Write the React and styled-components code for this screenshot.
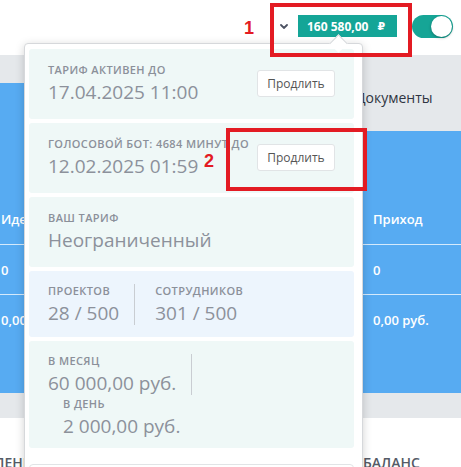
import React from "react";
import styled, { createGlobalStyle } from "styled-components";

const GlobalStyle = createGlobalStyle`
  html, body {
    margin: 0;
    padding: 0;
    overflow: hidden;
    background: #fff;
    font-family: "Open Sans", "DejaVu Sans", sans-serif;
  }
`;

const cards = [
  { label: "Тариф активен до", value: "17.04.2025 11:00", action: "Продлить" },
  { label: "Голосовой бот: 4684 минут до", value: "12.02.2025 01:59", action: "Продлить" },
  { label: "Ваш тариф", value: "Неограниченный" },
];

const App = () => {
  return (
    <>
      <GlobalStyle />
      <Page>
        <Header>
          <Chevron viewBox="0 0 8 5">
            <path d="M1 1l3 3 3-3" fill="none" stroke="#4c5262" strokeWidth="1.8" strokeLinecap="round" />
          </Chevron>
          <Balance>
            160 580,00<Rub>₽</Rub>
          </Balance>
          <Toggle>
            <Knob />
          </Toggle>
        </Header>

        <TabBar>
          <ActiveTab />
          <Tab $width="140px">Отчёты</Tab>
          <Tab>Документы</Tab>
        </TabBar>

        <Table>
          <HeadRow>
            <Cell>Идеи</Cell>
            <Cell>Приход</Cell>
          </HeadRow>
          <Row>
            <Cell>0</Cell>
            <Cell>0</Cell>
          </Row>
          <Row $last>
            <Cell>0,00 руб.</Cell>
            <Cell>0,00 руб.</Cell>
          </Row>
        </Table>

        <Band />

        <Summary>
          <SummaryCell $end>ПОСТУПЛЕНИЯ</SummaryCell>
          <SummaryCell>Баланс</SummaryCell>
        </Summary>

        <Dropdown>
          <Caret />
          {cards.map((c, i) => (
            <Card key={i}>
              <div>
                <Label>{c.label}</Label>
                <Value>{c.value}</Value>
              </div>
              {c.action && <Button>{c.action}</Button>}
            </Card>
          ))}

          <Card $tone="blue" $pad="13px 19px 12px" $start>
            <Stat $divider>
              <Label>Проектов</Label>
              <Value>28 / 500</Value>
            </Stat>
            <Stat $inset="20px">
              <Label>Сотрудников</Label>
              <Value>301 / 500</Value>
            </Stat>
          </Card>

          <Card $pad="13px 19px 10px" $column>
            <Stat $divider>
              <Label>В месяц</Label>
              <Value>60 000,00 руб.</Value>
            </Stat>
            <Stat $inset="15px" $top="2px">
              <Label>В день</Label>
              <Value>2 000,00 руб.</Value>
            </Stat>
          </Card>

          <Footer />
        </Dropdown>

        <Frame $x="270px" $y="3px" $w="142px" $h="54px" />
        <Mark $x="244px" $y="17px">1</Mark>
        <Frame $x="226px" $y="128px" $w="141px" $h="63px" />
        <Mark $x="204px" $y="150px">2</Mark>
      </Page>
    </>
  );
};

export default App;

const Page = styled.div`
  position: relative;
  width: 461px;
  height: 467px;
  overflow: hidden;
`;

const Header = styled.div`
  height: 55px;
  box-sizing: border-box;
  padding: 0 8px 3px 0;
  display: flex;
  align-items: center;
  justify-content: flex-end;
`;

const Chevron = styled.svg`
  width: 8px;
  height: 5px;
  margin-right: 10px;
`;

const Balance = styled.div`
  height: 22px;
  width: 99px;
  box-sizing: border-box;
  padding-left: 9px;
  display: flex;
  align-items: center;
  background: #14a597;
  color: #fff;
  font-size: 12px;
  font-weight: 700;
  margin-right: 15px;
`;

const Rub = styled.span`
  margin-left: 9px;
  font-family: "DejaVu Sans", sans-serif;
  font-size: 11px;
  font-weight: 700;
`;

const Toggle = styled.div`
  width: 41px;
  height: 23px;
  border-radius: 12px;
  background: #16a596;
  display: flex;
  align-items: center;
  justify-content: flex-end;
  padding: 0 1px;
  box-sizing: border-box;
`;

const Knob = styled.div`
  width: 21px;
  height: 21px;
  border-radius: 50%;
  background: #fff;
  box-shadow: 0 1px 3px rgba(0, 0, 0, 0.3);
`;

const TabBar = styled.div`
  height: 76px;
  box-sizing: border-box;
  padding-top: 28px;
  background: #e5e8eb;
  display: flex;
`;

const ActiveTab = styled.div`
  width: 200px;
  height: 48px;
  background: #57abf2;
`;

const Tab = styled.div`
  width: ${(p) => p.$width || "auto"};
  box-sizing: border-box;
  padding: 5px 16px;
  line-height: 20px;
  font-size: 14px;
  color: #2f3542;
`;

const Table = styled.div`
  background: #57abf2;
  height: 262px;
  color: #fff;
  font-size: 13px;
  font-weight: 600;
`;

const HeadRow = styled.div`
  height: 114px;
  display: grid;
  grid-template-columns: 361px 1fr;
  align-items: end;
  padding-bottom: 15px;
  box-sizing: border-box;
  border-bottom: 1px solid rgba(255, 255, 255, 0.75);
`;

const Row = styled.div`
  height: 50px;
  display: grid;
  grid-template-columns: 361px 1fr;
  align-items: center;
  box-sizing: border-box;
  border-bottom: ${(p) => (p.$last ? "none" : "1px solid rgba(255, 255, 255, 0.75)")};
`;

const Cell = styled.div`
  padding: 0 12px 0 1px;
  line-height: 20px;
  white-space: nowrap;
  & + & {
    padding-left: 12px;
  }
`;

const Band = styled.div`
  height: 25px;
  background: #e5e8eb;
`;

const Summary = styled.div`
  display: grid;
  grid-template-columns: 361px 1fr;
  padding-top: 35px;
`;

const SummaryCell = styled.div`
  display: flex;
  justify-content: ${(p) => (p.$end ? "flex-end" : "flex-start")};
  padding: ${(p) => (p.$end ? "0 318px 0 0" : "0 0 0 2px")};
  font-size: 14px;
  font-weight: 600;
  color: #555b66;
  text-transform: uppercase;
  white-space: nowrap;
  line-height: 20px;
`;

const Dropdown = styled.div`
  position: absolute;
  left: 24px;
  top: 43px;
  width: 339px;
  box-sizing: border-box;
  padding: 5px 8px 0 4px;
  background: #fff;
  border: 1px solid #d6d8db;
  border-radius: 4px;
  box-shadow: 0 2px 10px rgba(0, 0, 0, 0.18);
  display: flex;
  flex-direction: column;
  gap: 4px;
`;

const Caret = styled.div`
  position: absolute;
  top: -7px;
  left: 307px;
  width: 12px;
  height: 12px;
  background: #fff;
  border-top: 1px solid #d6d8db;
  border-left: 1px solid #d6d8db;
  transform: rotate(45deg);
`;

const Card = styled.div`
  background: ${(p) => (p.$tone === "blue" ? "#edf5fd" : "#eff8f7")};
  border-radius: 3px;
  padding: ${(p) => p.$pad || "14px 19px 15px"};
  display: flex;
  flex-direction: ${(p) => (p.$column ? "column" : "row")};
  align-items: ${(p) => (p.$column ? "flex-start" : "center")};
  justify-content: ${(p) => (p.$column || p.$start ? "flex-start" : "space-between")};
`;

const Label = styled.div`
  font-size: 11px;
  line-height: 14px;
  font-weight: 600;
  letter-spacing: 0.4px;
  text-transform: uppercase;
  color: #8b909a;
  margin-bottom: 3px;
  white-space: nowrap;
`;

const Value = styled.div`
  font-size: 19px;
  line-height: 24px;
  color: #8c919b;
  white-space: nowrap;
`;

const Button = styled.button`
  width: 78px;
  height: 27px;
  background: #fff;
  border: 1px solid #e1e4e6;
  border-radius: 3px;
  font-family: "Open Sans", sans-serif;
  font-size: 12px;
  color: #555;
  padding: 0;
`;

const Stat = styled.div`
  padding-left: ${(p) => p.$inset || "0"};
  padding-right: ${(p) => (p.$divider ? "15px" : "0")};
  margin-top: ${(p) => p.$top || "0"};
  border-right: ${(p) => (p.$divider ? "1px solid #c9cdd2" : "none")};
`;

const Footer = styled.div`
  margin-top: 12px;
  height: 40px;
  border: 1px solid #e1e4e6;
  border-radius: 4px;
`;

const Frame = styled.div`
  position: absolute;
  left: ${(p) => p.$x};
  top: ${(p) => p.$y};
  width: ${(p) => p.$w};
  height: ${(p) => p.$h};
  box-sizing: border-box;
  border: 4px solid #e31b23;
`;

const Mark = styled.div`
  position: absolute;
  left: ${(p) => p.$x};
  top: ${(p) => p.$y};
  font-family: "Liberation Sans", Arial, sans-serif;
  font-size: 18px;
  font-weight: 700;
  line-height: 22px;
  color: #e31b23;
`;
